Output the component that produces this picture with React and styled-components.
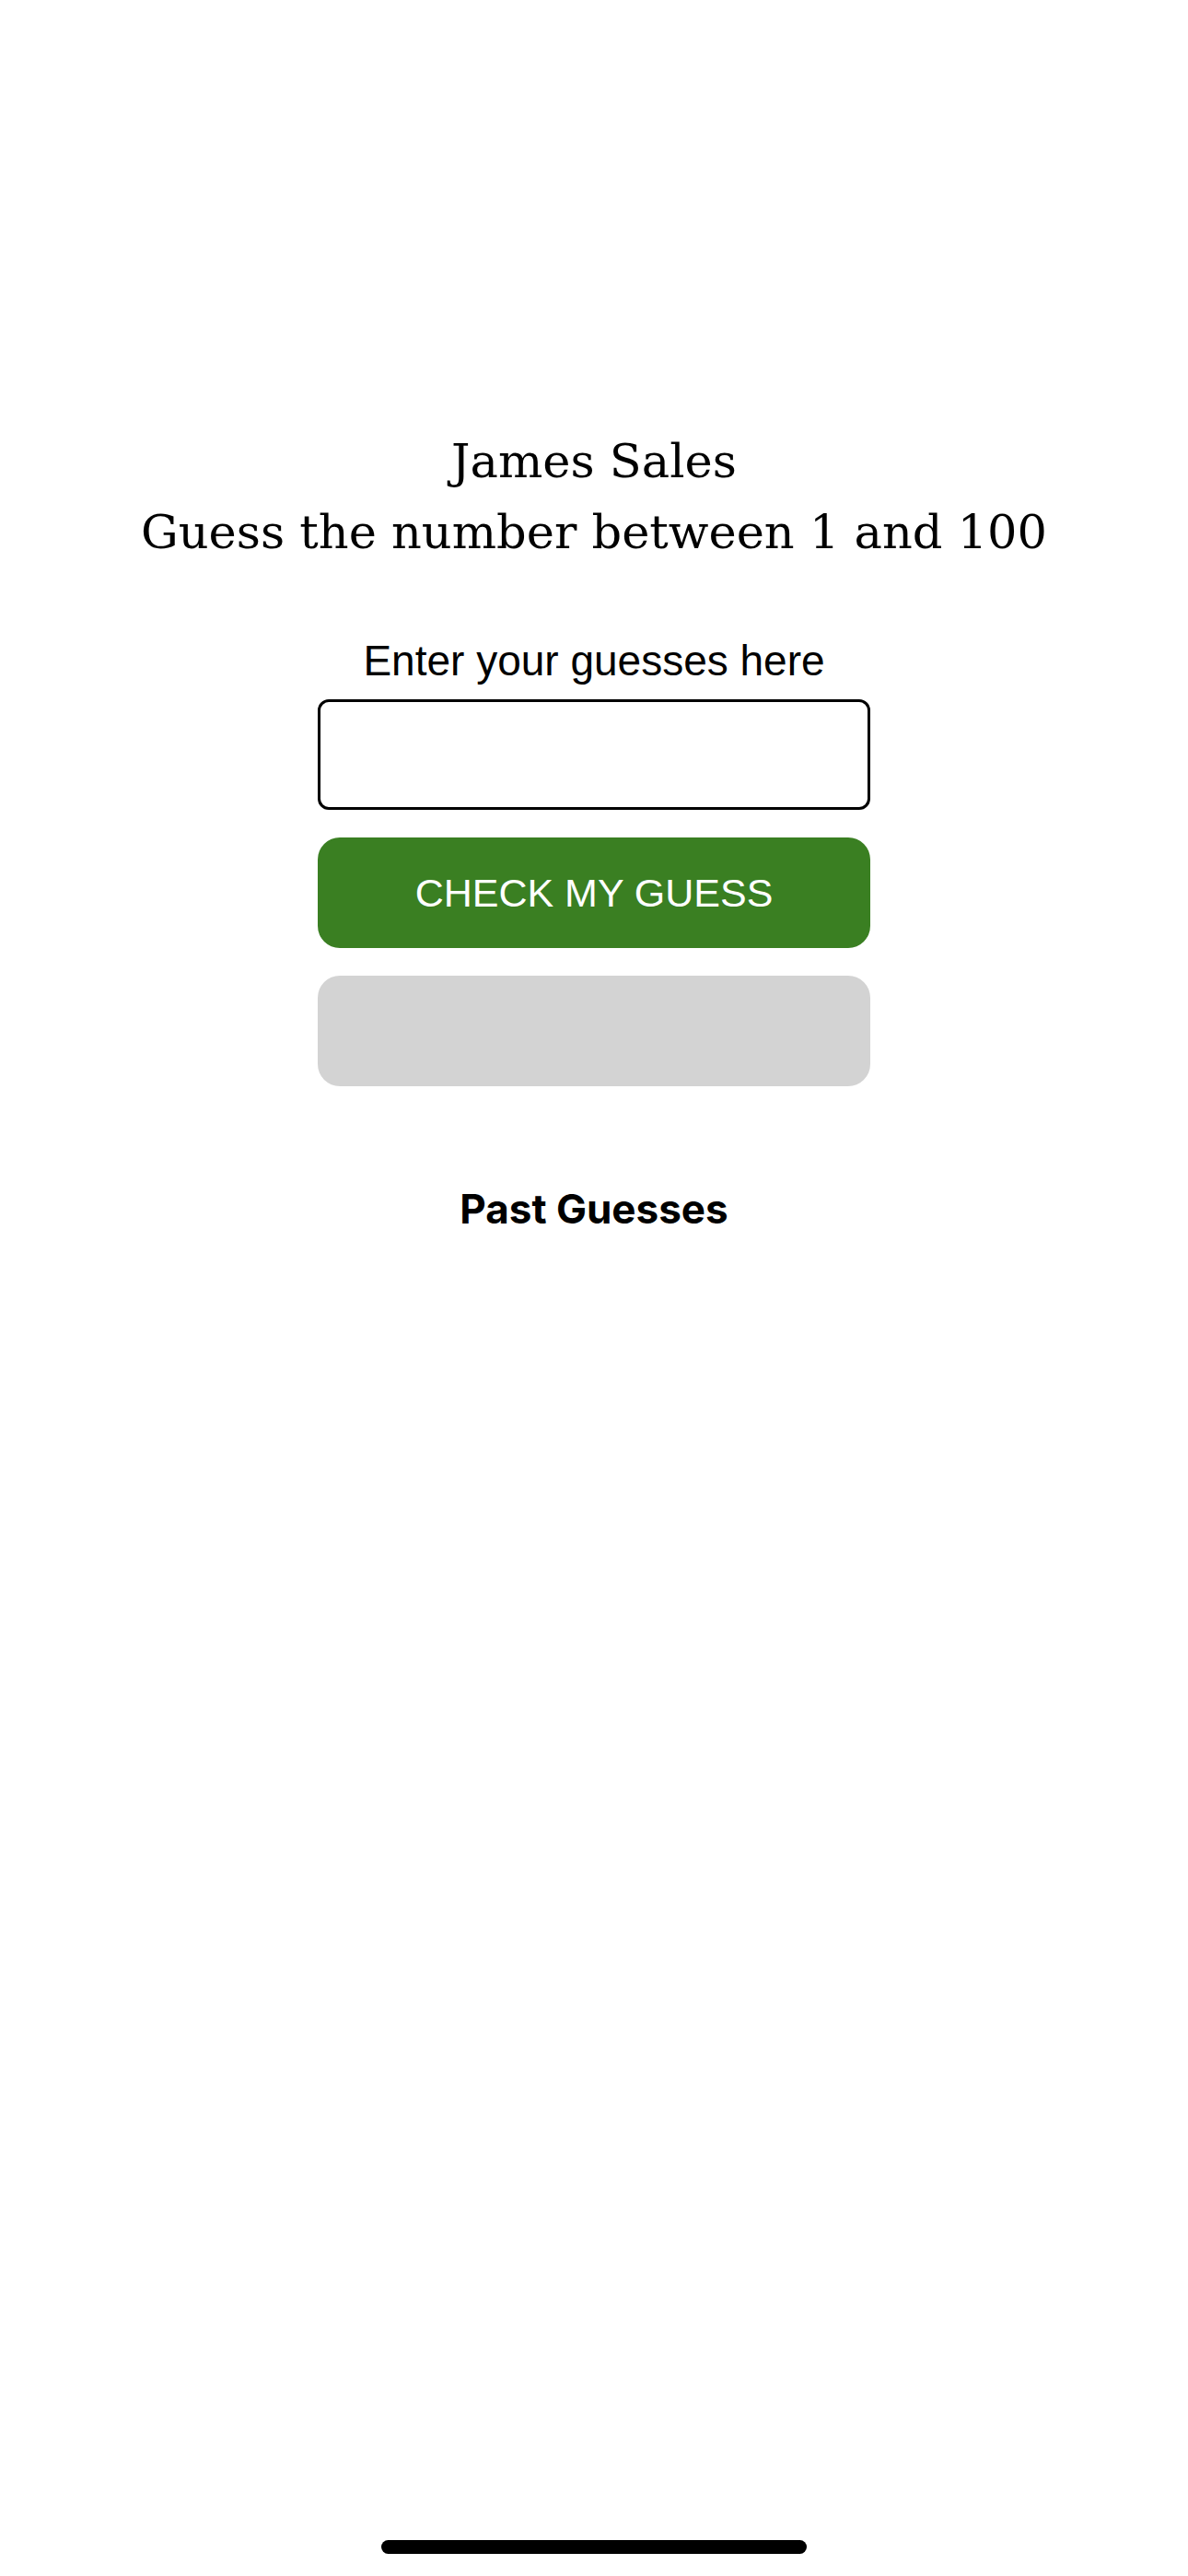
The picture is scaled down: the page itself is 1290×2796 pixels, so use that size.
import styled, { createGlobalStyle } from "styled-components";

const GlobalStyle = createGlobalStyle`
    html, body {
        margin: 0;
        padding: 0;
        background: #ffffff;
    }
    body {
        font-family: "Liberation Sans", Arial, sans-serif;
    }
`;

const Screen = styled.div`
    width: 1290px;
    height: 2796px;
    display: flex;
    flex-direction: column;
    align-items: center;
    padding-top: 462px;
    box-sizing: border-box;
    position: relative;
`;

const Title = styled.h1`
    margin: 0;
    font-family: "DejaVu Serif", "Liberation Serif", serif;
    font-weight: 400;
    font-size: 51px;
    line-height: 77px;
    text-align: center;
    color: #000;
`;

const Label = styled.div`
    margin-top: 73px;
    font-family: "Liberation Sans", Arial, sans-serif;
    font-size: 46px;
    line-height: 56px;
    color: #000;
`;

const GuessInput = styled.input`
    margin-top: 14px;
    width: 600px;
    height: 120px;
    box-sizing: border-box;
    border: 3px solid #000;
    border-radius: 12px;
    background: #fff;
    outline: none;
    font-size: 44px;
    padding: 0 20px;
`;

const Button = styled.button`
    margin-top: 30px;
    width: 600px;
    height: 120px;
    border: none;
    border-radius: 24px;
    background: ${(p) => p.$bg};
    color: #fff;
    font-family: "Liberation Sans", Arial, sans-serif;
    font-size: 43px;
    font-weight: 400;
    cursor: pointer;
`;

const PastTitle = styled.h2`
    margin: 107px 0 0;
    font-family: Inter, "Liberation Sans", sans-serif;
    font-weight: 700;
    font-size: 44px;
    line-height: 52px;
    color: #000;
`;

const HomeIndicator = styled.div`
    position: absolute;
    bottom: 24px;
    left: 50%;
    transform: translateX(-50%);
    width: 462px;
    height: 15px;
    border-radius: 8px;
    background: #000;
`;

function App() {
    return (
        <>
            <GlobalStyle />
            <Screen>
                <Title>
                    James Sales
                    <br />
                    Guess the number between 1 and 100
                </Title>
                <Label>Enter your guesses here</Label>
                <GuessInput type="text" />
                <Button $bg="#3a7f22">CHECK MY GUESS</Button>
                <Button $bg="#d3d3d3"></Button>
                <PastTitle>Past Guesses</PastTitle>
                <HomeIndicator />
            </Screen>
        </>
    );
}

export default App;
